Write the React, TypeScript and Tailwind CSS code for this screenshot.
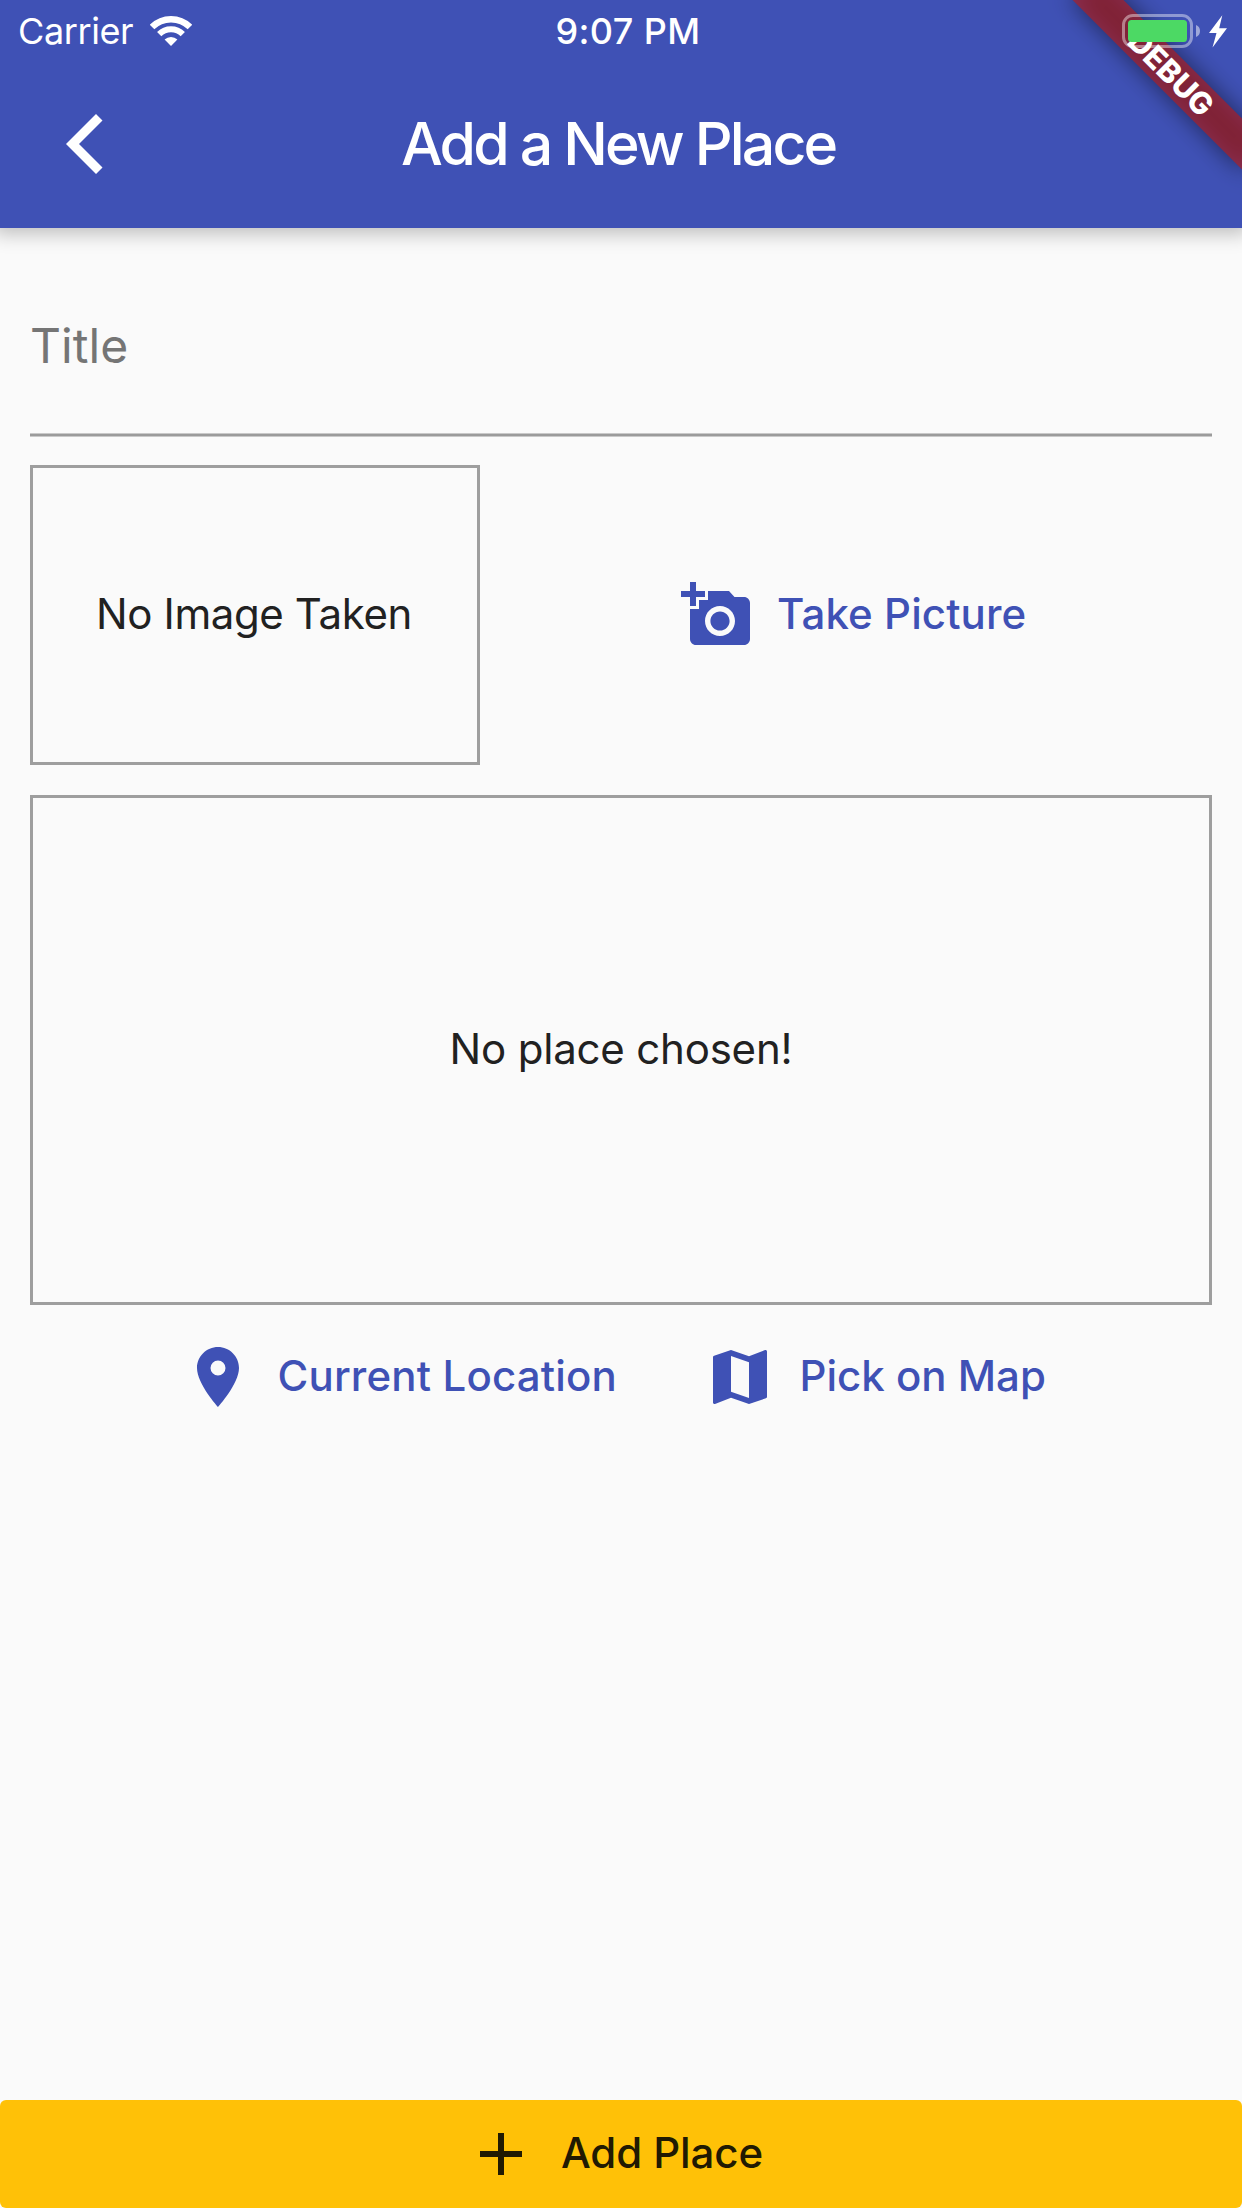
import type { ReactNode } from "react";
import { MdAdd, MdAddAPhoto, MdLocationOn, MdMap } from "react-icons/md";

function WifiIcon() {
  return (
    <svg className="h-[30px] w-[42px] shrink-0" viewBox="0 0 42 30" fill="none" stroke="#fff">
      <path d="M2.05 11.05a26.8 26.8 0 0 1 37.9 0" strokeWidth="6.4" />
      <path d="M9.2 18.2a16.7 16.7 0 0 1 23.6 0" strokeWidth="6" />
      <path d="M21 30l-6.4-6.4a9.2 9.2 0 0 1 12.8 0z" fill="#fff" stroke="none" />
    </svg>
  );
}

function Battery() {
  return (
    <svg className="h-[34px] w-[106px] shrink-0" viewBox="0 0 106 34">
      <rect x="1.5" y="1.5" width="68" height="31" rx="9.5" fill="none" stroke="#fff" strokeOpacity="0.42" strokeWidth="3" />
      <rect x="6" y="6" width="59" height="22" rx="3.5" fill="#4cd964" />
      <path d="M74 11c2.600 1 4 3.200 4 6s-1.400 5-4 6z" fill="#fff" fillOpacity="0.5" />
      <path d="M100.300 1.300L87 19h7.500L90.500 33.500L105 14.300h-7.800z" fill="#fff" />
    </svg>
  );
}

function DebugBanner() {
  return (
    <div className="absolute top-[54px] left-[1050px] h-9 w-60 rotate-45">
      <div className="absolute inset-0 bg-black/50 blur-[12px]" />
      <div className="relative flex h-full items-center justify-center bg-[#b71c1c]/63 pl-[3px] text-[30.6px] leading-none font-extrabold text-white">
        DEBUG
      </div>
    </div>
  );
}

function FlatButton({ icon, label, className = "" }: { icon: ReactNode; label: string; className?: string }) {
  return (
    <button className={`flex h-36 items-center gap-6 text-[42px] leading-none font-medium ${className}`}>
      {icon}
      <span className="pb-[2px] whitespace-nowrap">{label}</span>
    </button>
  );
}

export default function App() {
  return (
    <div className="flex h-[2208px] w-[1242px] flex-col overflow-hidden bg-[#fafafa] font-['Inter',sans-serif] text-[#212121]">
      <header className="relative z-10 h-[228px] shrink-0 bg-[#3f51b5] text-white shadow-[0_0_18px_6px_rgba(0,0,0,0.24)]">
        <div className="absolute inset-0 overflow-hidden">
          <DebugBanner />
        </div>
        <div className="relative grid h-[62px] grid-cols-3 items-center text-[36px] leading-none">
          <div className="flex items-center pl-[18px]">
            <span className="w-[132px] tracking-[-0.4px]">Carrier</span>
            <WifiIcon />
          </div>
          <span className="pl-[14px] text-center font-medium tracking-[0.4px]">9:07 PM</span>
          <div className="flex justify-end pr-[14px]">
            <Battery />
          </div>
        </div>
        <div className="relative flex h-[164px] items-center pl-[66px]">
          <svg className="h-[60px] w-[37px] shrink-0" viewBox="0 0 37 60" fill="#fff">
            <path d="M0 30L30 0l6.500 6.500L13 30l23.500 23.500L30 60z" />
          </svg>
          <h1 className="pb-[2px] pl-[298px] text-[59px] leading-none font-medium tracking-[-2.85px] whitespace-nowrap">Add a New Place</h1>
        </div>
      </header>

      <main className="flex grow flex-col px-[30px] pt-[30px]">
        <div className="flex h-[175px] items-center pt-[1px] text-[48px] leading-none text-[#757575]">
          <label className="tracking-[0.1px]">Title</label>
        </div>
        <div className="h-1 border-y border-[#c9c9c9] bg-[#9b9b9b]" />

        <section className="mt-7 flex items-center">
          <div className="flex h-[300px] w-[450px] items-center justify-center border-3 border-[#9e9e9e] pr-[2px] pb-[2px] text-[42px] leading-none tracking-[-0.4px]">
            No Image Taken
          </div>
          <FlatButton className="ml-[201px] tracking-[0.1px] text-[#3f51b5]" icon={<MdAddAPhoto className="size-[72px]" />} label="Take Picture" />
        </section>

        <section className="mt-[30px] flex h-[510px] items-center justify-center border-3 border-[#9e9e9e] pb-[2px] text-[42px] leading-none tracking-[-0.2px]">
          No place chosen!
        </section>

        <section className="flex text-[#3f51b5]">
          <FlatButton className="ml-[151.5px] w-[522px] tracking-[0.16px]" icon={<MdLocationOn className="size-[72px]" />} label="Current Location" />
          <FlatButton icon={<MdMap className="size-[72px]" />} label="Pick on Map" />
        </section>
      </main>

      <FlatButton
        className="h-[108px]! shrink-0 rounded-[6px] bg-[#ffc107] pl-[465px] tracking-[-0.1px] text-[#211a02]"
        icon={<MdAdd className="size-[72px]" />}
        label="Add Place"
      />
    </div>
  );
}
